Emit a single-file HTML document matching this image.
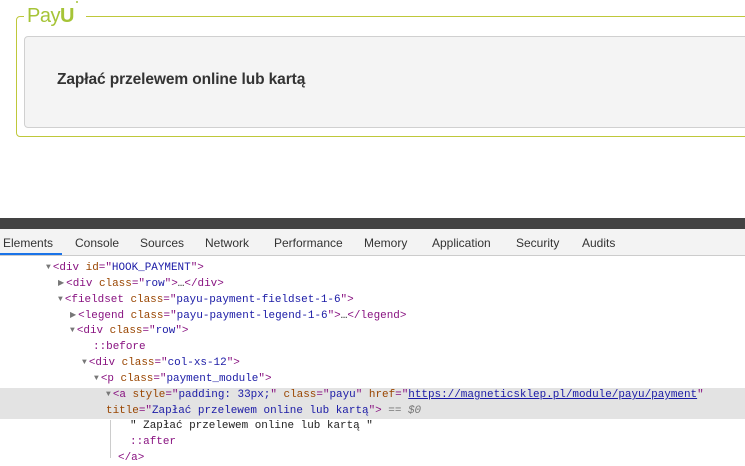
<!DOCTYPE html>
<html><head><meta charset="utf-8"><style>
body{margin:0;width:745px;height:458px;overflow:hidden;background:#fff;position:relative;font-family:"Liberation Sans",sans-serif}
.fs{position:absolute;left:16px;top:16px;width:760px;height:119px;border:1px solid #bfc83a;border-radius:4px}
.leg{position:absolute;left:24px;top:3px;background:#fff;padding:0 4px 0 3px;font-size:20px;color:#a6c437;letter-spacing:-0.5px;height:26px;line-height:26px}
.leg b{color:#a6c437;font-weight:bold}
.dots{display:inline-block;width:8px;height:10px;position:relative;top:-8px;vertical-align:top}
.dots i{position:absolute;width:2px;height:2px;border-radius:1px;background:#a6c437}
.box{position:absolute;left:24px;top:36px;width:760px;height:90px;background:#f4f4f4;border:1px solid #d0d0d0;border-radius:4px}
.txt{position:absolute;left:57px;top:71px;font-size:15.5px;font-weight:bold;color:#333;letter-spacing:-0.1px}
.dark{position:absolute;left:0;top:218px;width:745px;height:11px;background:#434343}
.tabs{position:absolute;left:0;top:229px;width:745px;height:26px;background:#f3f3f3;border-bottom:1px solid #ccc}
.tab{position:absolute;top:7px;font-size:12px;color:#333}
.ul{position:absolute;left:0;top:253px;width:62px;height:2px;background:#1a73e8}
.ln{position:absolute;font-family:"Liberation Mono",monospace;font-size:10.95px;color:#881280;white-space:pre;line-height:16px}
.a{color:#994500}.v{color:#1a1aa6}.g{color:#777;font-size:8px;position:relative;top:-1px;margin-right:2px}.k{color:#222}.p{color:#881280}
.hl{position:absolute;left:0;top:388px;width:745px;height:31px;background:#e3e3e3}
</style></head><body>
<div class="fs"></div>
<div class="leg">Pay<b>U</b><span class="dots"><i style="left:2px;top:6px"></i><i style="left:4px;top:3px"></i><i style="left:6px;top:0px"></i></span></div>
<div class="box"></div>
<div class="txt">Zapłać przelewem online lub kartą</div>
<div class="dark"></div>
<div class="tabs">
<span class="tab" style="left:3px">Elements</span>
<span class="tab" style="left:75px">Console</span>
<span class="tab" style="left:140px">Sources</span>
<span class="tab" style="left:205px">Network</span>
<span class="tab" style="left:274px">Performance</span>
<span class="tab" style="left:364px">Memory</span>
<span class="tab" style="left:432px">Application</span>
<span class="tab" style="left:516px">Security</span>
<span class="tab" style="left:582px">Audits</span>
</div>
<div class="ul"></div>
<div class="hl"></div>
<div style="position:absolute;left:110px;top:420px;width:1px;height:38px;background:#ccc"></div>
<div class="ln" style="left:46px;top:260px"><span class="g">▼</span>&lt;div <span class="a">id</span>="<span class="v">HOOK_PAYMENT</span>"&gt;</div>
<div class="ln" style="left:58px;top:276px"><span class="g">▶</span>&lt;div <span class="a">class</span>="<span class="v">row</span>"&gt;<span class="k">…</span>&lt;/div&gt;</div>
<div class="ln" style="left:58px;top:292px"><span class="g">▼</span>&lt;fieldset <span class="a">class</span>="<span class="v">payu-payment-fieldset-1-6</span>"&gt;</div>
<div class="ln" style="left:70px;top:308px"><span class="g">▶</span>&lt;legend <span class="a">class</span>="<span class="v">payu-payment-legend-1-6</span>"&gt;<span class="k">…</span>&lt;/legend&gt;</div>
<div class="ln" style="left:70px;top:323px"><span class="g">▼</span>&lt;div <span class="a">class</span>="<span class="v">row</span>"&gt;</div>
<div class="ln" style="left:93px;top:339px">::before</div>
<div class="ln" style="left:82px;top:355px"><span class="g">▼</span>&lt;div <span class="a">class</span>="<span class="v">col-xs-12</span>"&gt;</div>
<div class="ln" style="left:94px;top:371px"><span class="g">▼</span>&lt;p <span class="a">class</span>="<span class="v">payment_module</span>"&gt;</div>
<div class="ln" style="left:106px;top:387px"><span class="g">▼</span>&lt;a <span class="a">style</span>="<span class="v">padding: 33px;</span>" <span class="a">class</span>="<span class="v">payu</span>" <span class="a">href</span>="<span class="v" style="text-decoration:underline">https://magneticsklep.pl/module/payu/payment</span>"</div>
<div class="ln" style="left:106px;top:403px"><span class="a">title</span>="<span class="v">Zapłać przelewem online lub kartą</span>"&gt; <span style="color:#777">== <i>$0</i></span></div>
<div class="ln" style="left:130px;top:418px"><span class="k">" Zapłać przelewem online lub kartą "</span></div>
<div class="ln" style="left:130px;top:434px">::after</div>
<div class="ln" style="left:118px;top:450px">&lt;/a&gt;</div>
</body></html>
